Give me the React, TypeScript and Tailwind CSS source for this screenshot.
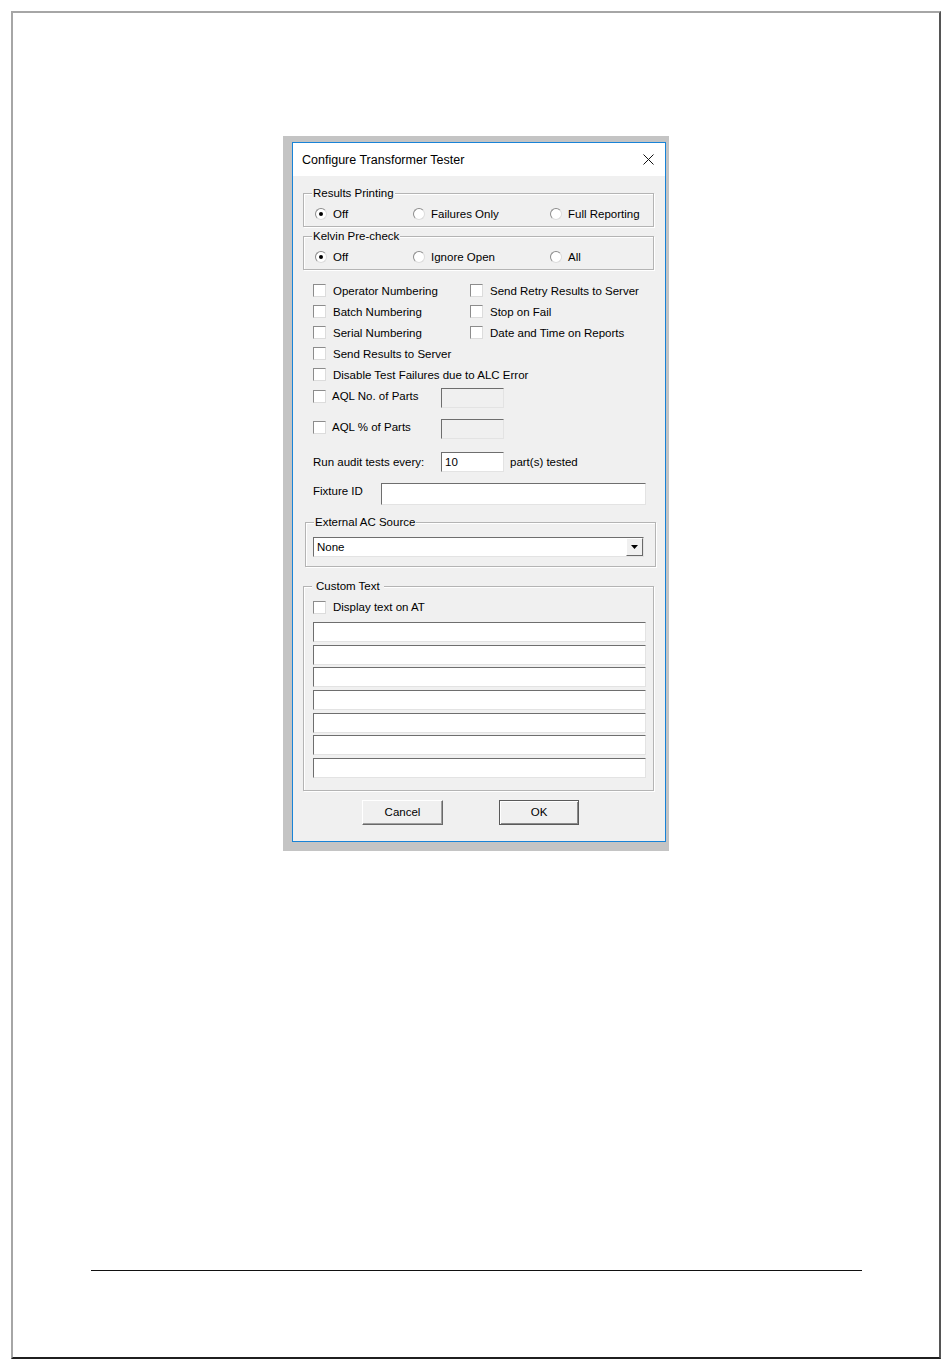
import React from "react";

// shared classic win32 bits
const sunkenBox =
  "border border-t-[#6e6e6e] border-l-[#6e6e6e] border-b-[#e3e3e3] border-r-[#e3e3e3]";
const groupBox =
  "border border-[#b4b4b4] shadow-[inset_1px_1px_0_#ffffff,1px_1px_0_#ffffff]";

const Check = () => (
  <span className="inline-block w-[13px] h-[13px] shrink-0 bg-white border border-t-[#8c8c8c] border-l-[#8c8c8c] border-b-[#dcdcdc] border-r-[#dcdcdc]" />
);

const Radio = ({ checked }: { checked?: boolean }) => (
  <span className="inline-flex items-center justify-center w-[12px] h-[12px] shrink-0 rounded-full bg-white border border-t-[#8c8c8c] border-l-[#8c8c8c] border-b-[#dcdcdc] border-r-[#dcdcdc]">
    {checked && <span className="w-[4px] h-[4px] rounded-full bg-black" />}
  </span>
);

const CheckItem = ({ label }: { label: string }) => (
  <div className="flex items-center gap-[7px]">
    <Check />
    <span className="leading-[14px] whitespace-nowrap">{label}</span>
  </div>
);

const RadioRow = ({ items }: { items: { label: string; checked?: boolean }[] }) => (
  <div className="flex items-center h-[14px] pl-[11px] pt-[7px] pb-[5px] box-content">
    {items.map((it, i) => (
      <div
        key={it.label}
        className={`flex items-center gap-[6px] ${i === 0 ? "w-[98px]" : i === 1 ? "w-[137px]" : ""}`}
      >
        <Radio checked={it.checked} />
        <span className="leading-[14px] whitespace-nowrap">{it.label}</span>
      </div>
    ))}
  </div>
);

const App: React.FC = () => {
  return (
    <div className="w-[950px] h-[1369px] bg-white p-[11px] font-['Liberation_Sans',Arial,sans-serif] text-[11.5px] text-black">
      <div className="w-[930px] h-[1348px] border-2 border-t-[#a6a6a6] border-l-[#a6a6a6] border-r-[#555555] border-b-[#1f1f1f] flex flex-col items-center pt-[123px]">
        {/* dialog screenshot frame */}
        <div className="bg-[#c4c4c4] pl-[9px] pt-[6px] pr-[3px] pb-[9px]">
          <div className="w-[374px] border border-[#1883d7] bg-[#f0f0f0] flex flex-col pb-[16px]">
            {/* title bar */}
            <div className="h-[33px] bg-white flex items-center justify-between pl-[9px] pr-[11px]">
              <span className="text-[12.5px] leading-[16px]">Configure Transformer Tester</span>
              <svg width="11" height="11" viewBox="0 0 11 11" className="block">
                <path d="M0.5 0.5 L10.5 10.5 M10.5 0.5 L0.5 10.5" stroke="#111" strokeWidth="1" />
              </svg>
            </div>

            {/* Results Printing */}
            <fieldset className={`${groupBox} ml-[10px] mt-[10px] w-[351px]`}>
              <legend className="ml-[8px] pl-[1px] pr-[1px] leading-[14px] bg-[#f0f0f0]">Results Printing</legend>
              <RadioRow
                items={[
                  { label: "Off", checked: true },
                  { label: "Failures Only" },
                  { label: "Full Reporting" },
                ]}
              />
            </fieldset>

            {/* Kelvin Pre-check */}
            <fieldset className={`${groupBox} ml-[10px] mt-[2px] w-[351px]`}>
              <legend className="ml-[8px] pl-[1px] pr-[1px] leading-[14px] bg-[#f0f0f0]">Kelvin Pre-check</legend>
              <RadioRow
                items={[
                  { label: "Off", checked: true },
                  { label: "Ignore Open" },
                  { label: "All" },
                ]}
              />
            </fieldset>

            {/* check options */}
            <div className="ml-[20px] mt-[10px] flex flex-col">
              <div className="h-[21px] flex items-center">
                <div className="w-[157px]"><CheckItem label="Operator Numbering" /></div>
                <CheckItem label="Send Retry Results to Server" />
              </div>
              <div className="h-[21px] flex items-center">
                <div className="w-[157px]"><CheckItem label="Batch Numbering" /></div>
                <CheckItem label="Stop on Fail" />
              </div>
              <div className="h-[21px] flex items-center">
                <div className="w-[157px]"><CheckItem label="Serial Numbering" /></div>
                <CheckItem label="Date and Time on Reports" />
              </div>
              <div className="h-[21px] flex items-center">
                <CheckItem label="Send Results to Server" />
              </div>
              <div className="h-[21px] flex items-center">
                <CheckItem label="Disable Test Failures due to ALC Error" />
              </div>

              <div className="mt-[3px] h-[20px] flex items-start">
                <div className="w-[128px] flex items-center gap-[6px] mt-[1px]">
                  <Check />
                  <span className="leading-[14px]">AQL No. of Parts</span>
                </div>
                <div className={`w-[63px] h-[20px] bg-[#f0f0f0] ${sunkenBox}`} />
              </div>

              <div className="mt-[11px] h-[20px] flex items-start">
                <div className="w-[128px] flex items-center gap-[6px] mt-[1px]">
                  <Check />
                  <span className="leading-[14px]">AQL % of Parts</span>
                </div>
                <div className={`w-[63px] h-[20px] bg-[#f0f0f0] ${sunkenBox}`} />
              </div>

              <div className="mt-[13px] h-[20px] flex items-center">
                <span className="w-[128px] leading-[14px]">Run audit tests every:</span>
                <div className={`w-[63px] h-[20px] bg-white pl-[3px] flex items-center ${sunkenBox}`}>
                  <span className="leading-[14px]">10</span>
                </div>
                <span className="ml-[6px] leading-[14px]">part(s) tested</span>
              </div>

              <div className="mt-[11px] h-[22px] flex items-start">
                <span className="w-[68px] leading-[14px] pt-[1px]">Fixture ID</span>
                <div className={`w-[265px] h-[22px] bg-white ${sunkenBox}`} />
              </div>
            </div>

            {/* External AC Source */}
            <fieldset className={`${groupBox} ml-[12px] mt-[10px] w-[351px] pl-[7px] pt-[8px] pb-[9px]`}>
              <legend className="ml-[1px] pl-[1px] pr-[1px] leading-[14px] bg-[#f0f0f0]">External AC Source</legend>
              <div className={`w-[331px] h-[20px] bg-white flex items-stretch ${sunkenBox}`}>
                <span className="flex-1 pl-[3px] leading-[18px]">None</span>
                <div className="w-[17px] bg-[#f0f0f0] border border-t-white border-l-white border-b-[#696969] border-r-[#696969] flex items-center justify-center">
                  <svg width="7" height="4" viewBox="0 0 7 4" className="block">
                    <polygon points="0,0 7,0 3.5,4" fill="#000" />
                  </svg>
                </div>
              </div>
            </fieldset>

            {/* Custom Text */}
            <fieldset className={`${groupBox} ml-[10px] mt-[12px] w-[351px] pl-[9px] pt-[7px] pb-[12px]`}>
              <legend className="-ml-px px-[4px] leading-[14px] bg-[#f0f0f0]">Custom Text</legend>
              <div className="h-[14px] flex items-center">
                <CheckItem label="Display text on AT" />
              </div>
              <div className="mt-[8px] flex flex-col gap-[2.67px]">
                {[0, 1, 2, 3, 4, 5, 6].map((i) => (
                  <div key={i} className={`w-[333px] h-[20px] bg-white ${sunkenBox}`} />
                ))}
              </div>
            </fieldset>

            {/* buttons */}
            <div className="mt-[9px] flex items-center pl-[69px]">
              <button className="w-[81px] h-[25px] bg-[#f0f0f0] border border-t-white border-l-white border-b-[#696969] border-r-[#696969] shadow-[inset_-1px_-1px_0_#a0a0a0] leading-[14px]">
                Cancel
              </button>
              <button className="ml-[56px] w-[80px] h-[25px] bg-[#f0f0f0] border border-[#5a5a5a] shadow-[inset_1px_1px_0_#ffffff,inset_-1px_-1px_0_#8a8a8a] leading-[14px]">
                OK
              </button>
            </div>
          </div>
        </div>

        {/* page footer rule */}
        <div className="mt-auto mb-[86px] w-[771px] h-px bg-[#111111]" />
      </div>
    </div>
  );
};

export default App;
